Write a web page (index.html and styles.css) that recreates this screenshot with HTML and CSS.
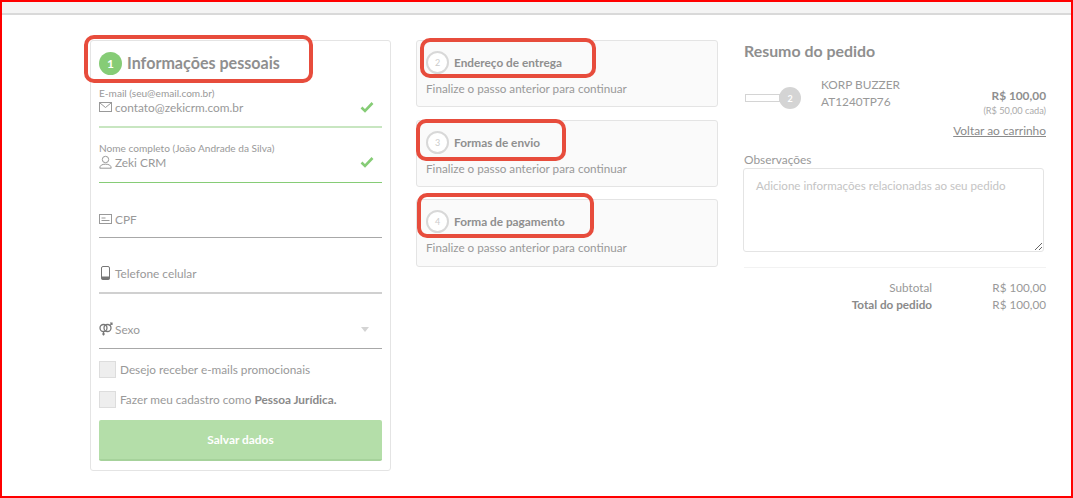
FILE: index.html
```html
<!DOCTYPE html>
<html lang="pt-BR">
<head>
<meta charset="utf-8">
<title>Checkout</title>
<link rel="stylesheet" href="styles.css">
</head>
<body>
<div class="frame">
  <div class="topbar"></div>
  <main class="columns">
    <section class="card personal">
      <h2 class="personal-title"><span class="num-active">1</span><span class="personal-text">Informações pessoais</span></h2>
      <div class="field field-email">
        <label class="field-label">E-mail (seu@email.com.br)</label>
        <div class="field-row">
          <svg class="icon" viewBox="0 0 14 14"><rect x="0.5" y="2.5" width="12" height="9" fill="none" stroke="#999"/><path d="M1 3l5.5 4.5L12 3" fill="none" stroke="#999"/></svg>
          <span class="field-value">contato@zekicrm.com.br</span>
          <svg class="check" viewBox="0 0 14 12"><path d="M1.5 6.5l3.5 3.5 7.5-8" fill="none" stroke="#86cc76" stroke-width="2.6"/></svg>
        </div>
      </div>
      <div class="field field-name">
        <label class="field-label">Nome completo (João Andrade da Silva)</label>
        <div class="field-row">
          <svg class="icon" viewBox="0 0 14 14"><circle cx="6.5" cy="4.5" r="3.2" fill="none" stroke="#999"/><path d="M0.8 13.2c0-3 2.4-4 5.7-4s5.700 1 5.700 4z" fill="none" stroke="#999"/></svg>
          <span class="field-value">Zeki CRM</span>
          <svg class="check" viewBox="0 0 14 12"><path d="M1.5 6.500l3.500 3.500 7.500-8" fill="none" stroke="#86cc76" stroke-width="2.6"/></svg>
        </div>
      </div>
      <div class="field field-plain">
        <div class="field-row">
          <svg class="icon" viewBox="0 0 14 14"><rect x="0.500" y="2.500" width="12" height="9" fill="none" stroke="#999"/><path d="M2.500 6h4M2.500 8.500h8" stroke="#999"/></svg>
          <span class="field-ph">CPF</span>
        </div>
      </div>
      <div class="field field-plain field-phone">
        <div class="field-row">
          <svg class="icon" viewBox="0 0 14 14"><rect x="2.500" y="0.500" width="8" height="13" rx="1.500" fill="none" stroke="#777"/><rect x="2.500" y="10.500" width="8" height="3" fill="#777"/></svg>
          <span class="field-ph">Telefone celular</span>
        </div>
      </div>
      <div class="field field-plain field-sex">
        <div class="field-row">
          <svg class="icon" viewBox="0 0 14 14"><circle cx="4.500" cy="6" r="3.500" fill="none" stroke="#777" stroke-width="1.300"/><circle cx="8.500" cy="6" r="3.500" fill="none" stroke="#777" stroke-width="1.300"/><path d="M4.500 9.500v4M3 12h3M11 3.500l2-2.500M11 1h2v2" fill="none" stroke="#777" stroke-width="1.200"/></svg>
          <span class="field-ph">Sexo</span>
          <span class="caret"></span>
        </div>
      </div>
      <label class="opt opt-first"><span class="box"></span>Desejo receber e-mails promocionais</label>
      <label class="opt"><span class="box"></span><span>Fazer meu cadastro como <b>Pessoa Jurídica.</b></span></label>
      <button class="save" type="button">Salvar dados</button>
    </section>

    <div class="steps">
      <section class="card step">
        <h3 class="step-title"><span class="num">2</span>Endereço de entrega</h3>
        <p class="step-note">Finalize o passo anterior para continuar</p>
      </section>
      <section class="card step">
        <h3 class="step-title"><span class="num">3</span>Formas de envio</h3>
        <p class="step-note">Finalize o passo anterior para continuar</p>
      </section>
      <section class="card step">
        <h3 class="step-title"><span class="num">4</span>Forma de pagamento</h3>
        <p class="step-note">Finalize o passo anterior para continuar</p>
      </section>
    </div>

    <aside class="summary">
      <h2 class="summary-title">Resumo do pedido</h2>
      <div class="item">
        <div class="thumb"><span class="thumb-img"></span><span class="qty">2</span></div>
        <div class="item-name">KORP BUZZER<br>AT1240TP76</div>
        <div class="item-price"><b>R$ 100,00</b><small>(R$ 50,00 cada)</small></div>
      </div>
      <div class="back-row"><a class="back">Voltar ao carrinho</a></div>
      <label class="obs-label">Observações</label>
      <textarea class="obs" placeholder="Adicione informações relacionadas ao seu pedido"></textarea>
      <div class="totals">
        <div class="total-row"><span class="total-label">Subtotal</span><span class="total-value">R$ 100,00</span></div>
        <div class="total-row"><b class="total-label">Total do pedido</b><span class="total-value">R$ 100,00</span></div>
      </div>
    </aside>
  </main>
  <span class="callout c1"></span>
  <span class="callout c2"></span>
  <span class="callout c3"></span>
  <span class="callout c4"></span>
</div>
</body>
</html>
```
FILE: styles.css
```css
* { box-sizing: border-box; }
html, body { margin: 0; padding: 0; background: #fff; }
body { font-family: Lato, "Liberation Sans", sans-serif; color: #999; overflow: hidden; }
.frame { position: relative; width: 1073px; height: 498px; border: 2px solid #f00; overflow: hidden; }
.topbar { height: 13px; background: #f4f4f4; border-bottom: 2px solid #d9d9d9; }
.columns { display: flex; align-items: flex-start; padding: 25px 0 0 88px; }
.card { border: 1px solid #e4e4e4; border-radius: 3px; }
.personal { width: 301px; height: 431px; padding: 0 8px; flex: none; }
.personal-title { display: flex; align-items: center; margin: 11px 0 0; height: 23px; font-size: 16.1px; font-weight: 700; color: #8f8f8f; white-space: nowrap; }
.personal-text { margin-bottom: 2px; }
.num-active { width: 23px; height: 23px; margin-right: 5px; border-radius: 50%; background: #86cc76; color: #fff; font-size: 12px; display: flex; align-items: center; justify-content: center; }
.field { border-bottom: 1px solid #a8a8a8; height: 55px; position: relative; }
.field-email { height: 41px; margin-top: 12px; border-bottom: 2px solid #c8e6c1; }
.field-name { border-bottom: 1px solid #86cc76; height: 55px; }
.field-phone { border-bottom: 2px solid #d0d0d0; height: 56px; }
.field-label { display: block; font-size: 10.1px; line-height: 12px; color: #999; white-space: nowrap; }
.field-name .field-label { padding-top: 14px; }
.field-row { display: flex; align-items: center; height: 16px; font-size: 11.85px; color: #999; }
.field-plain .field-row { position: absolute; left: 0; right: 0; bottom: 10px; }
.field-phone .field-row, .field-sex .field-row { bottom: 11px; }
.icon { width: 14px; height: 14px; margin-right: 2px; flex: none; }
.field-value { color: #999; }
.field-ph { color: #999; }
.check { width: 14px; height: 12px; margin-left: auto; margin-right: 8px; }
.caret { margin-left: auto; margin-right: 13px; width: 0; height: 0; border-left: 4px solid transparent; border-right: 4px solid transparent; border-top: 5px solid #d4d4d4; }
.opt { display: flex; align-items: center; height: 17px; font-size: 11.8px; color: #999; white-space: nowrap; }
.opt b { color: #8a8a8a; }
.opt-first { margin-top: 12px; margin-bottom: 13px; }
.box { width: 17px; height: 17px; margin-right: 4px; background: #eee; border: 1px solid #ddd; flex: none; }
.save { display: block; width: 283px; height: 41px; margin-top: 12px; border: 0; border-bottom: 2px solid #a6d29b; border-radius: 2px; background: #b4dea9; color: #fff; font: 700 11.9px Lato, sans-serif; }
.steps { width: 302px; margin-left: 25px; flex: none; display: flex; flex-direction: column; gap: 13px; }
.step { height: 67px; padding: 0 9px; background: #fafafa; }
.step:last-child { height: 68px; margin-top: -1px; }
.step-title { display: flex; align-items: center; margin: 10px 0 0; height: 23px; font-size: 11.8px; font-weight: 700; color: #8f8f8f; white-space: nowrap; }
.num { width: 23px; height: 23px; margin-right: 5px; border: 2px solid #d8d8d8; border-radius: 50%; font-size: 9px; font-weight: 400; color: #ccc; display: flex; align-items: center; justify-content: center; background: #fff; }
.step-note { margin: 6px 0 0; font-size: 11.7px; line-height: 16px; color: #999; white-space: nowrap; }
.summary { width: 302px; margin-left: 26px; flex: none; }
.summary-title { margin: 1px 0 0; font-size: 15.9px; line-height: 20px; font-weight: 700; color: #8f8f8f; }
.item { display: flex; margin-top: 15px; height: 42px; position: relative; }
.thumb { width: 77px; height: 22px; margin-top: 11px; padding-left: 1px; display: flex; align-items: center; flex: none; }
.thumb-img { width: 35px; height: 8px; flex: none; border: 1px solid #d4d4d4; background: #fff; }
.qty { width: 22px; height: 22px; margin-left: -1px; flex: none; border-radius: 50%; background: #d4d4d4; color: #fff; font-size: 9px; font-weight: 700; display: flex; align-items: center; justify-content: center; }
.item-name { font-size: 11.85px; line-height: 17px; color: #999; white-space: nowrap; }
.item-price { margin-left: auto; text-align: right; padding-top: 12px; }
.item-price b { display: block; font-size: 11.85px; line-height: 15px; color: #8f8f8f; }
.item-price small { display: block; font-size: 9.2px; line-height: 15px; color: #aaa; }
.back-row { text-align: right; margin-top: 5px; font-size: 11.9px; line-height: 16px; }
.back { color: #8a8a8a; text-decoration: underline; }
.obs-label { display: block; margin-top: 13px; font-size: 11.9px; line-height: 15px; color: #999; }
.obs { display: block; width: 301px; height: 84px; margin-top: 1px; margin-left: -1px; padding: 10px 12px; border: 1px solid #e4e4e4; border-radius: 3px; font: 11.6px Lato, sans-serif; color: #999; }
.obs::placeholder { color: #c4c4c4; opacity: 1; }
.totals { margin-top: 15px; border-top: 1px solid #f2f2f2; padding-top: 11px; }
.total-row { display: flex; justify-content: flex-end; font-size: 11.7px; line-height: 17px; }
.total-label { color: #999; }
b.total-label { color: #8a8a8a; }
.total-value { width: 114px; text-align: right; color: #999; }
.callout { position: absolute; border: 4px solid #e74c3c; border-radius: 10px; }
.c1 { left: 82px; top: 33px; width: 229px; height: 48px; }
.c2 { left: 418px; top: 36px; width: 176px; height: 40px; }
.c3 { left: 414px; top: 117px; width: 150px; height: 42px; }
.c4 { left: 415px; top: 191px; width: 177px; height: 45px; }
```
